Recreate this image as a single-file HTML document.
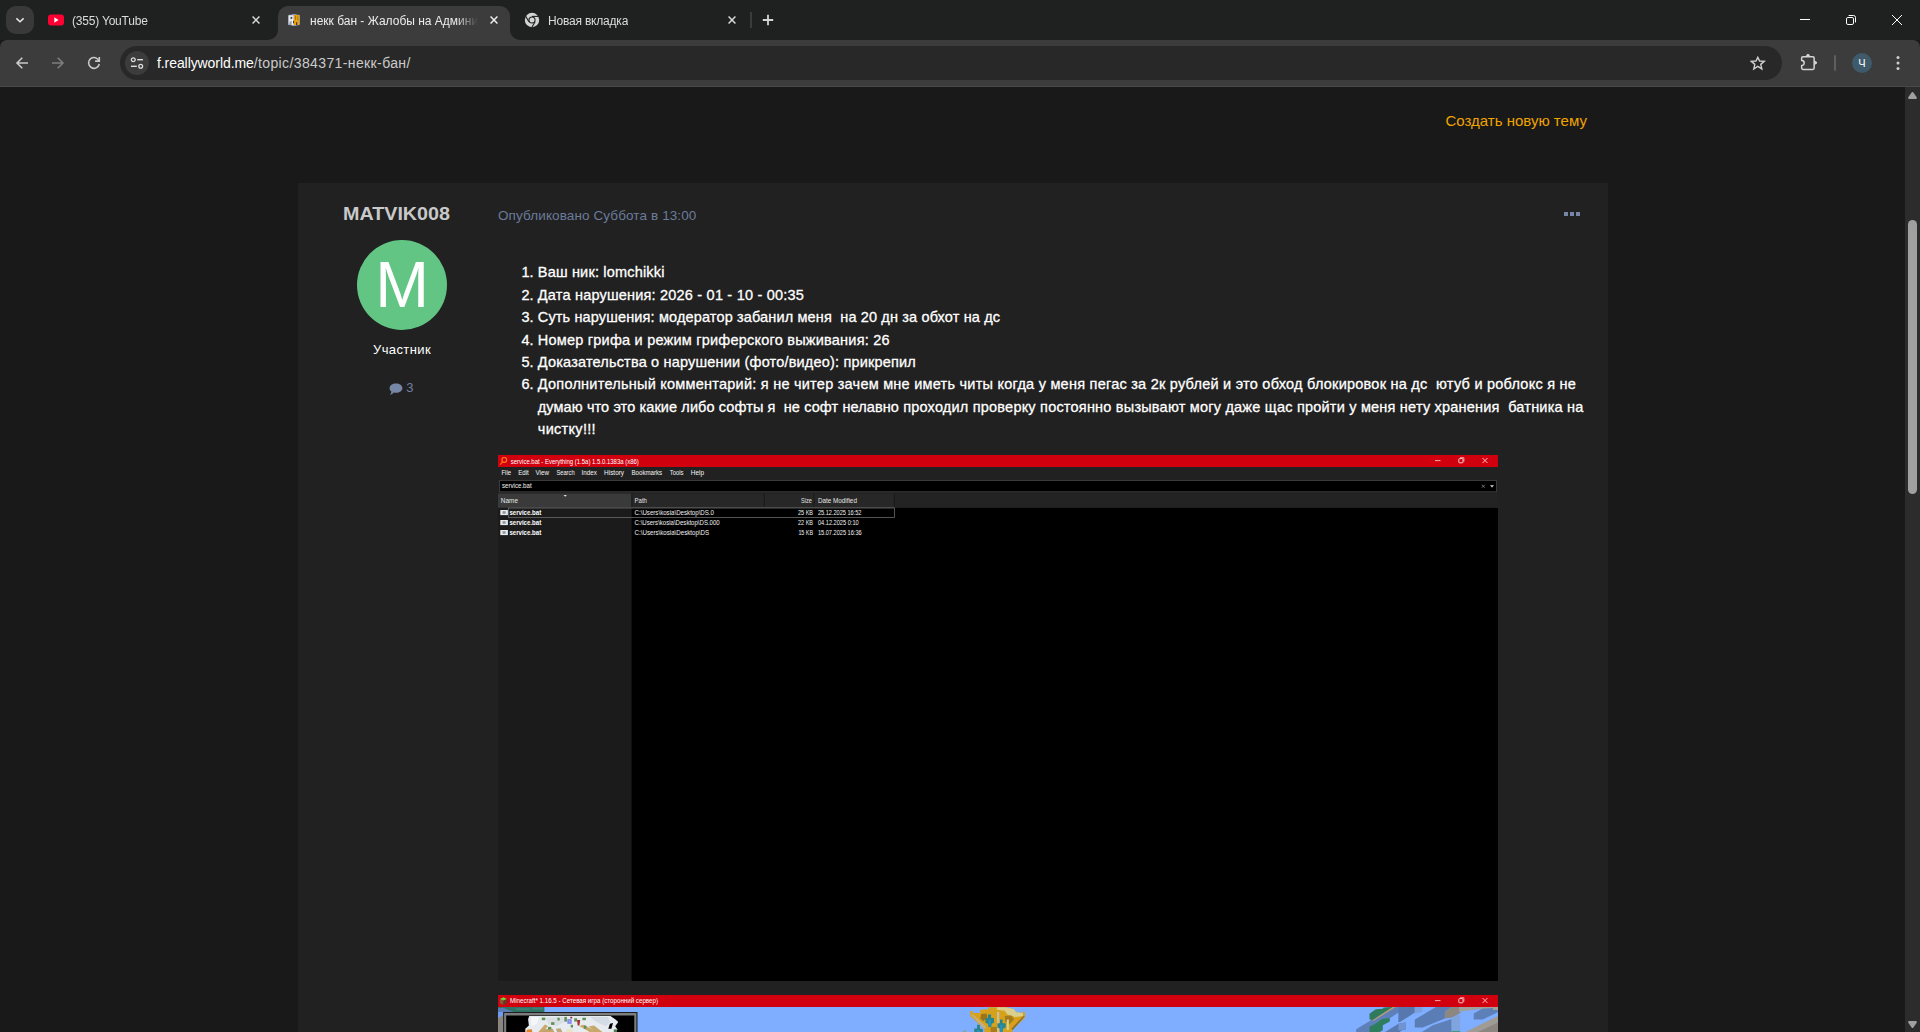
<!DOCTYPE html>
<html lang="ru">
<head>
<meta charset="utf-8">
<title>некк бан</title>
<style>
*{box-sizing:border-box;margin:0;padding:0}
html,body{width:1920px;height:1032px;overflow:hidden;background:#191919;font-family:"Liberation Sans",sans-serif;}
.abs{position:absolute}
#frame{position:absolute;left:0;top:0;width:1920px;height:40px;background:#1f2020}
#toolbar{position:absolute;left:0;top:40px;width:1920px;height:46px;background:#3c3c3c;border-radius:7px 7px 0 0}
#tbline{position:absolute;left:0;top:86px;width:1920px;height:1px;background:#484a48}
#tabsearch{position:absolute;left:6px;top:6px;width:28px;height:28px;border-radius:10px;background:#393939}
.tabtitle{position:absolute;top:13px;will-change:transform;height:16px;line-height:16px;font-size:12px;color:#dcdcdc;white-space:nowrap;overflow:hidden}
#t2{-webkit-mask-image:linear-gradient(90deg,#000 0,#000 146px,transparent 168px);mask-image:linear-gradient(90deg,#000 0,#000 146px,transparent 168px)}
#acttab{position:absolute;left:278px;top:6px;width:232px;height:34px;background:#3c3c3c;border-radius:10px 10px 0 0}
#omni{position:absolute;left:120px;top:46px;width:1662px;height:34px;border-radius:17px;background:#282828}
#siteinfo{position:absolute;left:125px;top:51px;width:24px;height:24px;border-radius:12px;background:#3c3c3c}
#url{position:absolute;left:157px;top:53px;height:20px;line-height:20px;font-size:14px;color:#fff;white-space:nowrap}
#url b{font-weight:400;letter-spacing:-0.08px}
#url span{color:#cbcbcb;letter-spacing:0.38px}
#page{position:absolute;left:0;top:87px;width:1905px;height:945px;background:#191919;overflow:hidden}
#sbar{position:absolute;left:1905px;top:87px;width:15px;height:945px;background:#2c2c2c}
#thumb{position:absolute;left:1908px;top:220px;width:9px;height:274px;border-radius:4.5px;background:#a0a0a0}
#card{position:absolute;left:298px;top:183px;width:1310px;height:849px;background:#212121}
.ln{position:absolute;left:537.8px;height:22.4px;line-height:22.4px;font-size:14.5px;color:#fff;white-space:nowrap;-webkit-text-stroke:0.3px #fff}
.ln i{position:absolute;left:-16.3px;font-style:normal}
</style>
</head>
<body>
<!-- ============ browser frame ============ -->
<div id="frame"></div>
<div id="toolbar"></div>
<div id="tbline"></div>

<!-- tab search -->
<div id="tabsearch"></div>
<svg class="abs" style="left:14px;top:14px" width="12" height="12" viewBox="0 0 12 12"><path d="M2.4 4.4 L6 7.8 L9.6 4.4" fill="none" stroke="#e6e6e6" stroke-width="1.5"/></svg>

<!-- tab 1 : youtube -->
<svg class="abs" style="left:48px;top:14px" width="16" height="12" viewBox="0 0 16 12"><rect x="0" y="0.4" width="16" height="11.2" rx="3" fill="#ff0033"/><path d="M6.3 3.3 L10.6 6 L6.3 8.7 Z" fill="#fff"/></svg>
<div class="tabtitle" style="left:72px;letter-spacing:-0.2px">(355) YouTube</div>
<svg class="abs xbtn" style="left:251px;top:15px" width="10" height="10" viewBox="0 0 10 10"><path d="M1.1 1.1 L8.9 8.9 M8.9 1.1 L1.1 8.9" stroke="#dadada" stroke-width="1.7" fill="none" transform="translate(0.6 0.6) scale(0.88)"/></svg>

<!-- active tab -->
<div id="acttab"></div>
<svg class="abs" style="left:268px;top:30px" width="10" height="10" viewBox="0 0 10 10"><path d="M0 10 A10 10 0 0 0 10 0 L10 10 Z" fill="#3c3c3c"/></svg>
<svg class="abs" style="left:510px;top:30px" width="10" height="10" viewBox="0 0 10 10"><path d="M10 10 A10 10 0 0 1 0 0 L0 10 Z" fill="#3c3c3c"/></svg>
<!-- favicon RW -->
<svg class="abs" style="left:286px;top:12px" width="16" height="16" viewBox="0 0 16 16">
 <path d="M2.2 4 Q2.2 2.9 3.4 2.8 L5.4 2.8 Q5.6 2 7 2 L9.4 2 Q10.6 2 10.9 2.8 L12.8 2.8 Q14 2.9 14 4 L14 12 Q14 13.1 12.8 13.2 L10.9 13.2 Q10.6 14 9.4 14 L7 14 Q5.6 14 5.4 13.2 L3.4 13.2 Q2.2 13.1 2.2 12 Z" fill="#8f99b6"/>
 <rect x="2.6" y="3.2" width="5.1" height="9.9" rx="0.6" fill="#e3e5ec"/>
 <rect x="5.7" y="7.2" width="1.2" height="5.8" fill="#fafafa"/>
 <path d="M3.6 10.2 L5.7 8.6 V13 H3 Z" fill="#9a9eab"/>
 <ellipse cx="5.4" cy="5.9" rx="0.95" ry="0.85" fill="#262b38"/>
 <rect x="7.9" y="3" width="5.3" height="10" rx="0.5" fill="#f0a100"/>
 <rect x="9.1" y="3.6" width="0.9" height="4.3" fill="#98741c"/>
 <rect x="11.4" y="4.1" width="0.9" height="4.3" fill="#a67c18"/>
 <rect x="10" y="10.3" width="1.2" height="2.7" fill="#34364e"/>
 <ellipse cx="7.6" cy="9.9" rx="0.6" ry="1.5" fill="#2b3045"/>
</svg>
<div class="tabtitle" id="t2" style="left:310px;width:168px;color:#ececec">некк бан - Жалобы на Админи</div>
<svg class="abs xbtn" style="left:489px;top:15px" width="10" height="10" viewBox="0 0 10 10"><path d="M1.1 1.1 L8.9 8.9 M8.9 1.1 L1.1 8.9" stroke="#eeeeee" stroke-width="1.7" fill="none" transform="translate(0.6 0.6) scale(0.88)"/></svg>

<!-- tab 3 : new tab -->
<svg class="abs" style="left:524px;top:12px" width="16" height="16" viewBox="0 0 16 16">
 <circle cx="8" cy="8" r="7.2" fill="#d4d4d4"/>
 <circle cx="8" cy="8" r="3.6" fill="#1f2020"/>
 <circle cx="8" cy="8" r="2.5" fill="#d4d4d4"/>
 <path d="M8 4.4 L14.6 4.4" stroke="#1f2020" stroke-width="1.1"/>
 <path d="M4.9 9.8 L1.7 4.3" stroke="#1f2020" stroke-width="1.1"/>
 <path d="M11.1 9.8 L7.9 15.3" stroke="#1f2020" stroke-width="1.1"/>
</svg>
<div class="tabtitle" style="left:548px;letter-spacing:-0.2px">Новая вкладка</div>
<svg class="abs xbtn" style="left:727px;top:15px" width="10" height="10" viewBox="0 0 10 10"><path d="M1.1 1.1 L8.9 8.9 M8.9 1.1 L1.1 8.9" stroke="#dadada" stroke-width="1.7" fill="none" transform="translate(0.6 0.6) scale(0.88)"/></svg>
<div class="abs" style="left:750px;top:12px;width:2px;height:16px;background:#3b3b3b"></div>
<svg class="abs" style="left:762px;top:14px" width="12" height="12" viewBox="0 0 12 12"><path d="M6 0.8 V11.2 M0.8 6 H11.2" stroke="#d4d4d4" stroke-width="1.8" fill="none"/></svg>

<!-- window controls -->
<div class="abs" style="left:1800px;top:19px;width:10px;height:1px;background:#fff"></div>
<svg class="abs" style="left:1845px;top:14px" width="12" height="12" viewBox="0 0 12 12">
 <rect x="1.5" y="3.5" width="7" height="7" rx="1.4" fill="none" stroke="#fff" stroke-width="1"/>
 <path d="M3.6 1.5 H8.5 Q10.5 1.5 10.5 3.5 V8.4" fill="none" stroke="#fff" stroke-width="1"/>
</svg>
<svg class="abs" style="left:1891px;top:14px" width="12" height="12" viewBox="0 0 12 12"><path d="M1 1 L11 11 M11 1 L1 11" stroke="#fff" stroke-width="1" fill="none"/></svg>

<!-- toolbar icons -->
<svg class="abs" style="left:14px;top:55px" width="16" height="16" viewBox="0 0 16 16"><path d="M14 8 H3.6 M8.3 2.7 L3 8 L8.3 13.3" fill="none" stroke="#c9c9c9" stroke-width="1.6"/></svg>
<svg class="abs" style="left:50px;top:55px" width="16" height="16" viewBox="0 0 16 16"><path d="M2 8 H12.4 M7.7 2.7 L13 8 L7.7 13.3" fill="none" stroke="#7d7d7d" stroke-width="1.6"/></svg>
<svg class="abs" style="left:86px;top:55px" width="16" height="16" viewBox="0 0 16 16"><path d="M13.1 6.1 A5.4 5.4 0 1 0 13.3 9" fill="none" stroke="#c9c9c9" stroke-width="1.6"/><path d="M13.3 1.9 V6.1 H9.1" fill="none" stroke="#c9c9c9" stroke-width="1.6"/></svg>

<div id="omni"></div>
<div id="siteinfo"></div>
<svg class="abs" style="left:129px;top:55px" width="16" height="16" viewBox="0 0 16 16">
 <circle cx="4.3" cy="4.7" r="1.9" fill="none" stroke="#dedede" stroke-width="1.3"/><path d="M8.2 4.7 H14" stroke="#dedede" stroke-width="1.4"/>
 <circle cx="11.7" cy="11.3" r="1.9" fill="none" stroke="#dedede" stroke-width="1.3"/><path d="M2 11.3 H7.8" stroke="#dedede" stroke-width="1.4"/>
</svg>
<div id="url"><b>f.reallyworld.me</b><span>/topic/384371-некк-бан/</span></div>

<svg class="abs" style="left:1750.2px;top:55.4px" width="15.6" height="15.6" viewBox="0 0 18 18"><path d="M9 2.7 L11.1 6.9 L16.5 7.3 L12.4 10.8 L13.7 16.1 L9 13.2 L4.3 16.1 L5.6 10.8 L1.5 7.3 L6.9 6.9 Z" fill="none" stroke="#d0d0d0" stroke-width="1.6" stroke-linejoin="miter"/></svg>
<svg class="abs" style="left:1799px;top:52px" width="20" height="20" viewBox="0 0 20 20"><path d="M4 4.65 H13.8 Q15.15 4.65 15.15 6 V16 Q15.15 17.4 13.8 17.4 H4 Q2.65 17.4 2.65 16 V13.5 A2.55 2.55 0 0 0 2.65 8.4 V6 Q2.65 4.65 4 4.65 Z" fill="none" stroke="#d4d4d4" stroke-width="1.5" stroke-linejoin="round"/><path d="M6.4 4.5 C7.4 4.3 7.3 1.7 9 1.7 C10.7 1.7 10.6 4.3 11.6 4.5 Z M15.3 8.2 C15.6 9 18.1 9.2 18.1 10.7 C18.1 12.2 15.6 12.4 15.3 13.2 Z" fill="#d4d4d4"/></svg>
<div class="abs" style="left:1834px;top:55px;width:2px;height:16px;background:#5e5e5e;border-radius:1px"></div>
<div class="abs" style="left:1852px;top:53px;width:20px;height:20px;border-radius:10px;background:#3f5a6a"></div>
<div class="abs" style="left:1852px;top:53px;width:20px;height:20px;line-height:20px;text-align:center;font-size:11px;color:#fff">Ч</div>
<svg class="abs" style="left:1894px;top:55px" width="8" height="16" viewBox="0 0 8 16"><circle cx="4" cy="2.6" r="1.5" fill="#cfcfcf"/><circle cx="4" cy="8" r="1.5" fill="#cfcfcf"/><circle cx="4" cy="13.4" r="1.5" fill="#cfcfcf"/></svg>
<!-- ============ page ============ -->
<div id="page"></div>
<div id="card"></div>

<div class="abs" id="create" style="left:1445.5px;top:112px;font-size:15px;line-height:18px;color:#f0a400;white-space:nowrap">Создать новую тему</div>

<div class="abs" id="user" style="left:342.7px;top:203px;font-size:18px;line-height:22px;font-weight:700;color:#c9c9c9;white-space:nowrap;transform:scaleX(1.095);transform-origin:0 0">MATVIK008</div>
<div class="abs" id="pub" style="left:498px;top:207px;font-size:13.5px;line-height:17px;color:#6b7b9a;letter-spacing:0.11px;white-space:nowrap">Опубликовано Суббота в 13:00</div>
<div class="abs" style="left:1564px;top:212px;width:4px;height:4px;background:#7686a8;box-shadow:6px 0 0 #7686a8,12px 0 0 #7686a8"></div>

<!-- avatar -->
<div class="abs" style="left:357px;top:240px;width:90px;height:90px;border-radius:45px;background:#62c584"></div>
<div class="abs" id="avM" style="left:357px;top:240.3px;width:90px;height:90px;line-height:90px;text-align:center;font-size:64.5px;color:#fff">M</div>
<div class="abs" id="role" style="left:342px;top:341px;width:120px;text-align:center;font-size:13px;line-height:17px;color:#fff;letter-spacing:0.4px;white-space:nowrap">Участник</div>
<svg class="abs" style="left:389px;top:383px" width="14" height="13" viewBox="0 0 14 13"><path d="M7 0.6 C10.6 0.6 13.4 2.6 13.4 5.2 C13.4 7.8 10.6 9.8 7 9.8 C6.2 9.8 5.5 9.7 4.8 9.5 C3.9 10.6 2.4 11.6 0.9 11.8 C1.7 10.9 2.3 9.8 2.4 8.6 C1.3 7.8 0.6 6.6 0.6 5.2 C0.6 2.6 3.4 0.6 7 0.6 Z" fill="#7787a8"/></svg>
<div class="abs" id="cnt" style="left:406.3px;top:379px;font-size:13px;line-height:17px;color:#6e7fa1;white-space:nowrap">3</div>

<!-- list -->
<div class="ln" style="top:261px"><i>1.</i><span style="letter-spacing:0.18px">Ваш ник: lomchikki</span></div>
<div class="ln" style="top:284px"><i>2.</i><span style="letter-spacing:0.2px">Дата нарушения: 2026 - 01 - 10 - 00:35</span></div>
<div class="ln" style="top:306px"><i>3.</i><span style="letter-spacing:0.14px">Суть нарушения: модератор забанил меня&nbsp; на 20 дн за обхот на дс</span></div>
<div class="ln" style="top:329px"><i>4.</i><span style="letter-spacing:0.22px">Номер грифа и режим гриферского выживания: 26</span></div>
<div class="ln" style="top:351px"><i>5.</i><span style="letter-spacing:0.18px">Доказательства о нарушении (фото/видео): прикрепил</span></div>
<div class="ln" style="top:373px"><i>6.</i><span style="letter-spacing:0.24px">Дополнительный комментарий: я не читер зачем мне иметь читы когда у меня пегас за 2к рублей и это обход блокировок на дс&nbsp; ютуб и роблокс я не</span></div>
<div class="ln" style="top:396px"><span style="letter-spacing:0.1px">думаю что это какие либо софты я&nbsp; не софт нелавно </span><span style="letter-spacing:0.21px">проходил проверку постоянно вызывают могу даже щас пройти у меня нету хранения&nbsp; батника на</span></div>
<div class="ln" style="top:418px"><span style="letter-spacing:0.3px">чистку!!!</span></div>
<!-- ============ embedded image 1 : Everything window ============ -->
<svg class="abs" style="left:498px;top:455px" width="1000" height="526" viewBox="0 0 1000 526" font-family="Liberation Sans, sans-serif">
 <rect width="1000" height="526" fill="#000"/>
 <!-- title bar -->
 <rect width="1000" height="12" fill="#d1000e"/>
 <circle cx="6.3" cy="4.9" r="2.4" fill="none" stroke="#ff7a1a" stroke-width="1.2"/><path d="M4.6 6.8 L2.2 9.6" stroke="#ff6a10" stroke-width="1.3"/>
 <text x="12.8" y="8.6" font-size="6.9" fill="#fff" textLength="128" lengthAdjust="spacingAndGlyphs">service.bat - Everything (1.5a) 1.5.0.1383a (x86)</text>
 <path d="M937 5.6 H942.5" stroke="#ffd9d9" stroke-width="0.8"/>
 <rect x="960.8" y="3.6" width="4.2" height="4.2" rx="0.8" fill="none" stroke="#ffe0e0" stroke-width="0.9"/><path d="M962.1 2.7 H965.9 V6.6" fill="none" stroke="#ffe0e0" stroke-width="0.7"/>
 <path d="M984.5 3 L989.5 8 M989.5 3 L984.5 8" stroke="#ffe6e6" stroke-width="0.8"/>
 <!-- menu + search area -->
 <rect y="12" width="1000" height="27" fill="#212121"/>
 <g font-size="6.9" fill="#f6f6f6">
  <text x="3.4" y="20" textLength="9.7" lengthAdjust="spacingAndGlyphs">File</text>
  <text x="20.2" y="20" textLength="10.6" lengthAdjust="spacingAndGlyphs">Edit</text>
  <text x="37.5" y="20" textLength="13.5" lengthAdjust="spacingAndGlyphs">View</text>
  <text x="58.4" y="20" textLength="18.2" lengthAdjust="spacingAndGlyphs">Search</text>
  <text x="83.6" y="20" textLength="15.2" lengthAdjust="spacingAndGlyphs">Index</text>
  <text x="106.1" y="20" textLength="20" lengthAdjust="spacingAndGlyphs">History</text>
  <text x="133.5" y="20" textLength="30.6" lengthAdjust="spacingAndGlyphs">Bookmarks</text>
  <text x="171.7" y="20" textLength="13.8" lengthAdjust="spacingAndGlyphs">Tools</text>
  <text x="192.8" y="20" textLength="13.3" lengthAdjust="spacingAndGlyphs">Help</text>
 </g>
 <rect x="1.5" y="25.5" width="997" height="11.3" fill="#000" stroke="#454545" stroke-width="0.8"/>
 <text x="4" y="33.4" font-size="6.8" fill="#f0f0f0" textLength="29.6" lengthAdjust="spacingAndGlyphs">service.bat</text>
 <path d="M983.8 29.7 L986.8 32.7 M986.8 29.7 L983.8 32.7" stroke="#b8b8b8" stroke-width="0.6"/>
 <path d="M992 30.3 H996 L994 32.5 Z" fill="#d8d8d8"/>
 <!-- header -->
 <rect y="38.5" width="1000" height="14.4" fill="#232323"/>
 <rect y="38.5" width="133.6" height="14.2" fill="#3a3a3a"/>
 <rect x="133.6" y="38.5" width="262.8" height="14.2" fill="#272727"/>
 <path d="M133.9 38.5 V52.5 M266.4 38.5 V52.5 M316 38.5 V52.5 M396.4 38.5 V52.5" stroke="#161616" stroke-width="0.8"/>
 <path d="M0 52.4 H396.6" stroke="#4a4a4a" stroke-width="0.6"/>
 <path d="M65.6 40 H68.8 L67.2 41.7 Z" fill="#e8e8e8"/>
 <g font-size="6.9" fill="#e6e6e6">
  <text x="2.8" y="48.4" textLength="17.2" lengthAdjust="spacingAndGlyphs">Name</text>
  <text x="136.6" y="48.4" textLength="12.3" lengthAdjust="spacingAndGlyphs">Path</text>
  <text x="303" y="48.4" textLength="10.8" lengthAdjust="spacingAndGlyphs">Size</text>
  <text x="319.9" y="48.4" textLength="39" lengthAdjust="spacingAndGlyphs">Date Modified</text>
 </g>
 <!-- rows -->
 <rect y="52.7" width="133.6" height="473.3" fill="#1b1b1b"/>
 <rect x="10.4" y="53" width="386" height="9.6" fill="none" stroke="#6a6a6a" stroke-width="0.8"/>
 <g fill="#e9e9e9"><rect x="2.3" y="55" width="7.6" height="5.1"/><rect x="2.3" y="65" width="7.6" height="5.1"/><rect x="2.3" y="75" width="7.6" height="5.1"/></g>
 <g fill="#8d939b"><rect x="4.6" y="56.2" width="3" height="2.6"/><rect x="4.6" y="66.2" width="3" height="2.6"/><rect x="4.6" y="76.2" width="3" height="2.6"/></g>
 <g font-size="6.9" font-weight="700" fill="#fff">
  <text x="11.4" y="59.7" textLength="31.8" lengthAdjust="spacingAndGlyphs">service.bat</text>
  <text x="11.4" y="69.7" textLength="31.8" lengthAdjust="spacingAndGlyphs">service.bat</text>
  <text x="11.4" y="79.7" textLength="31.8" lengthAdjust="spacingAndGlyphs">service.bat</text>
 </g>
 <g font-size="6.9" fill="#f2f2f2">
  <text x="136.6" y="59.8" textLength="79.4" lengthAdjust="spacingAndGlyphs">C:\Users\kosia\Desktop\DS.0</text>
  <text x="136.6" y="69.8" textLength="85.1" lengthAdjust="spacingAndGlyphs">C:\Users\kosia\Desktop\DS.000</text>
  <text x="136.6" y="79.8" textLength="74.5" lengthAdjust="spacingAndGlyphs">C:\Users\kosia\Desktop\DS</text>
  <text x="300" y="59.8" textLength="15" lengthAdjust="spacingAndGlyphs">25 KB</text>
  <text x="300" y="69.8" textLength="15" lengthAdjust="spacingAndGlyphs">22 KB</text>
  <text x="300.4" y="79.8" textLength="14.6" lengthAdjust="spacingAndGlyphs">15 KB</text>
  <text x="319.9" y="59.8" textLength="43.5" lengthAdjust="spacingAndGlyphs">25.12.2025 16:52</text>
  <text x="319.9" y="69.8" textLength="40.8" lengthAdjust="spacingAndGlyphs">04.12.2025 0:10</text>
  <text x="319.9" y="79.8" textLength="43.8" lengthAdjust="spacingAndGlyphs">15.07.2025 16:36</text>
 </g>
</svg>

<!-- ============ embedded image 2 : Minecraft window (cut by viewport) ============ -->
<svg class="abs" style="left:498px;top:995px" width="1000" height="37" viewBox="0 0 1000 37" font-family="Liberation Sans, sans-serif">
 <rect width="1000" height="37" fill="#7fadff"/>
 <rect width="1000" height="12" fill="#d1000e"/>
 <!-- cube icon -->
 <path d="M5.4 2.2 L9 4 L5.4 5.8 L1.8 4 Z" fill="#6fd43a"/><path d="M1.8 4 L5.4 5.8 V10 L1.8 8.2 Z" fill="#8a5a32"/><path d="M9 4 L5.4 5.8 V10 L9 8.2 Z" fill="#5e3c20"/>
 <text x="12" y="8.4" font-size="6.9" fill="#fff" textLength="148" lengthAdjust="spacingAndGlyphs">Minecraft* 1.16.5 - Сетевая игра (сторонний сервер)</text>
 <path d="M937 5.6 H942.5" stroke="#ffd9d9" stroke-width="0.8"/>
 <rect x="960.8" y="3.6" width="4.2" height="4.2" rx="0.8" fill="none" stroke="#ffe0e0" stroke-width="0.9"/><path d="M962.1 2.7 H965.9 V6.6" fill="none" stroke="#ffe0e0" stroke-width="0.7"/>
 <path d="M984.5 3 L989.5 8 M989.5 3 L984.5 8" stroke="#ffe6e6" stroke-width="0.8"/>
 <!-- top-left blocks -->
 <path d="M0 12 H46.4 V16.8 L44 17.2 H0 Z" fill="#327266"/><path d="M18 13.2 H32 V15 H18 Z M34 12.6 H45 V14.6 H34 Z" fill="#3d8274"/>
 <path d="M0 13.2 L5 12.8 L16.5 17.2 H0 Z" fill="#5b7bb4"/>
 <path d="M0 17 H5 V23 H0 Z" fill="#6f9bf0"/>
 <path d="M0 23 L5 20.5 V37 H0 Z" fill="#8a857f"/>
 <!-- minimap -->
 <path d="M5.1 17.1 L139.5 17.1 L139.5 37.6 L5.1 37.6 Z" fill="#1d1d1d"/>
 <path d="M6.1 18.0 L138.4 18.0 L138.4 37.6 L6.1 37.6 Z" fill="#7d7d7d"/>
 <path d="M8.2 20.4 L136.3 20.4 L136.3 37.6 L8.2 37.6 Z" fill="#000"/>
 <path d="M31.2 21.0 L112.5 21.0 L117.2 24.3 L120.3 27.0 L117.2 31.3 L119.5 34.4 L117.2 37.6 L27.3 37.6 L27.3 33.7 L30.9 30.5 L30.1 24.3 Z" fill="#e7ecf1"/>
 <path d="M92.2 21.9 L109.4 21.9 L112.5 26.6 L107.8 31.3 L97.7 26.6 Z" fill="#d3dbe4"/>
 <path d="M32.8 21.9 L40.6 21.9 L39.1 29.0 L33.6 31.3 Z" fill="#f4f6f8"/>
 <path d="M48.4 22.7 L65.6 21.9 L67.2 26.6 L59.4 31.3 L50.0 29.0 Z" fill="#d9dfe3"/>
 <path d="M39.8 37.6 L46.9 29.4 L50.0 30.9 L44.7 37.6 Z" fill="#c9a96a"/>
 <path d="M46.1 34.3 L54.7 33.7 L56.6 37.6 L43.8 37.6 Z" fill="#c2a468"/>
 <path d="M57.8 33.7 L62.5 33.3 L64.8 37.6 L59.4 37.6 Z" fill="#bda77a"/>
 <path d="M81.2 30.9 L85.2 29.8 L101.2 37.6 L92.6 37.6 Z" fill="#c9a96a"/>
 <path d="M90.6 31.5 L96.1 30.5 L105.1 37.6 L98.8 37.6 Z" fill="#c6a86c"/>
 <path d="M68.0 34.4 L75.0 34.4 L75.0 37.6 L68.0 37.6 Z" fill="#e9e5c6"/>
 <path d="M43.8 22.6 L47.3 22.6 L47.3 25.2 L43.8 25.2 Z" fill="#5f9152"/>
 <path d="M53.1 27.2 L56.4 27.2 L56.4 29.9 L53.1 29.9 Z" fill="#5f9152"/>
 <path d="M66.4 21.9 L68.9 21.9 L68.9 26.6 L66.4 26.6 Z" fill="#5f9152"/>
 <path d="M76.2 23.3 L79.1 23.3 L79.1 26.6 L76.2 26.6 Z" fill="#5f9152"/>
 <path d="M84.4 22.7 L87.9 22.7 L87.9 25.2 L84.4 25.2 Z" fill="#5f9152"/>
 <path d="M50.0 31.9 L53.3 31.9 L53.3 34.4 L50.0 34.4 Z" fill="#5f9152"/>
 <path d="M85.9 30.5 L88.3 30.5 L88.3 33.7 L85.9 33.7 Z" fill="#5f9152"/>
 <path d="M72.7 29.8 L75.0 29.8 L75.0 32.5 L72.7 32.5 Z" fill="#5f9152"/>
 <path d="M59.4 22.7 L61.7 22.7 L61.7 25.5 L59.4 25.5 Z" fill="#5f9152"/>
 <path d="M69.4 24.3 L73.6 24.3 L73.6 28.7 L69.4 28.7 Z" fill="#6a73ee"/>
 <path d="M70.5 25.4 L72.5 25.4 L72.5 27.6 L70.5 27.6 Z" fill="#a9b0ff"/>
 <path d="M79.1 24.9 L82.2 24.9 L81.4 30.5 L79.7 30.5 Z" fill="#a82b30"/>
 <path d="M72.3 21.8 L74.2 21.8 L74.2 23.5 L72.3 23.5 Z" fill="#9c2a2a"/>
 <path d="M29.1 34.4 L33.8 34.3 L34.5 37.6 L28.0 37.6 Z" fill="#e0842a"/>
 <path d="M111.9 28.8 L115.0 28.0 L113.4 33.8 L110.3 33.8 Z" fill="#000"/>
 <path d="M115.8 34.4 L118.9 34.4 L118.9 37.6 L115.8 37.6 Z" fill="#4e7d4a"/>
 <!-- yellow structure -->
 <path d="M472.1 16.3 L474.9 15.8 L474.9 17.9 L482.2 17.9 L482.2 14.7 L490.5 14.2 L490.5 12.2 L508.2 12.2 L516.1 14.2 L518.1 17.3 L524.9 18.1 L524.9 16.8 L527.0 16.8 L527.0 22.8 L514.5 35.0 L514.5 37.0 L486.4 37.0 L486.4 34.0 L472.8 21.5 L472.1 21.5 Z" fill="#d7a21a"/>
 <path d="M498.9 12.2 L508.2 12.2 L516.1 14.2 L518.1 17.3 L524.9 18.1 L524.9 21.0 L517.1 22.0 L509.3 19.4 L506.7 15.8 L498.9 14.7 Z" fill="#d8d08c"/>
 <path d="M483.2 18.9 L488.5 18.4 L489.5 22.5 L485.3 26.2 L482.2 23.6 Z" fill="#9a741c"/>
 <path d="M506.7 21.0 L513.5 20.5 L516.1 24.6 L510.9 29.8 L507.2 26.2 Z" fill="#a37c1e"/>
 <path d="M492.6 31.9 L498.9 31.9 L498.9 37.0 L492.6 37.0 Z" fill="#a87c1a"/>
 <path d="M472.8 19.4 L474.9 19.4 L488.5 31.9 L486.4 33.7 Z" fill="#c4b088"/>
 <path d="M527.0 21.0 L524.9 21.5 L513.5 33.5 L514.5 35.3 Z" fill="#8a6a3a"/>
 <path d="M499.1 16.8 L501.2 16.8 L501.2 37.0 L499.1 37.0 Z" fill="#c9c2a8"/>
 <path d="M508.8 24.6 L510.9 24.6 L510.9 35.0 L508.8 35.0 Z" fill="#d5cf98"/>
 <path d="M487.4 23.1 L490.0 23.1 L490.0 19.4 L493.1 19.4 L493.1 23.1 L496.0 23.1 L496.0 27.8 L493.7 28.8 L493.1 31.9 L490.5 31.9 L490.0 28.8 L487.4 27.8 Z" fill="#2b8588"/>
 <path d="M490.5 24.6 L493.1 24.6 L493.1 30.9 L490.5 30.9 Z" fill="#2393c4"/>
 <path d="M499.4 28.3 L502.0 28.3 L502.0 24.6 L504.6 24.6 L504.6 28.3 L507.7 28.3 L507.7 32.4 L505.1 33.5 L504.6 37.0 L502.0 37.0 L501.7 33.5 L499.4 32.4 Z" fill="#2b8588"/>
 <path d="M502.3 29.8 L504.6 29.8 L504.6 37.0 L502.3 37.0 Z" fill="#2393c4"/>
 <path d="M476.2 33.5 L479.1 33.5 L479.1 29.8 L481.9 29.8 L481.9 33.5 L484.8 34.0 L484.8 37.0 L476.2 37.0 Z" fill="#2b8588"/>
 <path d="M479.1 35.0 L481.9 35.0 L481.9 37.0 L479.1 37.0 Z" fill="#2393c4"/>
 <path d="M465.0 35.6 L467.6 35.3 L468.1 37.0 L464.8 37.0 Z" fill="#7fa79a"/>
 <!-- right blocks -->
 <path d="M858.2 37.0 L858.2 34.2 L894.6 12.1 L902.0 12.1 L902.0 16.4 L871.5 37.0 Z" fill="#5e80b8"/>
 <path d="M900.4 12.1 L916.8 12.1 L916.8 17.6 L902.0 27.1 L900.4 27.1 Z" fill="#5778ae"/>
 <path d="M916.8 12.1 L924.3 12.1 L924.3 16.8 L916.8 18.4 Z" fill="#7b9fdb"/>
 <path d="M871.5 18.8 L877.8 14.3 L884.8 13.8 L885.6 12.5 L892.6 12.1 L895.8 12.1 L883.2 19.5 L875.4 25.0 L871.5 24.6 Z" fill="#2e7a5c"/>
 <path d="M884.0 24.0 L891.8 23.1 L891.8 26.6 L884.8 30.2 L884.8 35.2 L881.7 37.0 L871.5 37.0 L871.5 31.8 L877.8 28.5 Z" fill="#2f7d5f"/>
 <path d="M874.7 25.0 L894.6 12.1 L897.7 12.1 L875.4 26.0 Z" fill="#b59c74"/>
 <path d="M916.8 24.6 L937.9 12.1 L953.6 12.1 L946.9 16.8 L946.9 23.5 L924.7 32.4 L916.8 32.4 Z" fill="#5b7db5"/>
 <path d="M887.2 37.0 L900.4 28.7 L907.9 27.6 L907.9 34.2 L902.8 35.7 L902.0 37.0 Z" fill="#587aaf"/>
 <path d="M900.4 28.7 L907.9 27.6 L907.9 34.4 L900.4 35.4 Z" fill="#7194d0"/>
 <path d="M923.9 37.0 L934.8 30.2 L953.6 24.0 L953.6 37.0 Z" fill="#5d80b8"/>
 <path d="M953.6 19.9 L962.2 19.9 L962.2 37.0 L953.6 37.0 Z" fill="#80a4dd"/>
 <path d="M946.9 16.8 L953.6 12.1 L961.4 12.1 L961.4 16.2 L962.9 17.8 L953.6 22.4 L946.9 23.5 Z" fill="#8c8780"/>
 <path d="M961.4 12.1 L1000.0 12.1 L1000.0 14.9 L995.0 14.9 L984.0 13.7 L961.4 16.5 Z" fill="#a39e97"/>
 <path d="M975.8 18.4 L984.0 13.8 L995.0 12.9 L995.0 14.9 L1000.0 14.9 L1000.0 17.0 L984.8 24.6 L975.8 24.6 Z" fill="#5d80b8"/>
 <path d="M967.6 37.0 L1000.0 20.9 L1000.0 37.0 Z" fill="#a09b94"/>
 <path d="M980.1 37.0 L1000.0 27.4 L1000.0 37.0 Z" fill="#8b867f"/>
 <path d="M953.6 36.0 L962.2 36.0 L962.2 37.0 L953.6 37.0 Z" fill="#3f9a7c"/>
</svg>
<!-- ============ scrollbar ============ -->
<div id="sbar"></div>
<div id="thumb"></div>
<svg class="abs" style="left:1907px;top:91px" width="11" height="9" viewBox="0 0 11 9"><path d="M5.5 2.2 L8.8 6.9 H2.2 Z" fill="#a0a0a0" stroke="#a0a0a0" stroke-width="2.2" stroke-linejoin="round"/></svg>
<svg class="abs" style="left:1907px;top:1020px" width="11" height="9" viewBox="0 0 11 9"><path d="M5.5 6.8 L8.8 2.1 H2.2 Z" fill="#a0a0a0" stroke="#a0a0a0" stroke-width="2.2" stroke-linejoin="round"/></svg>
</body>
</html>
